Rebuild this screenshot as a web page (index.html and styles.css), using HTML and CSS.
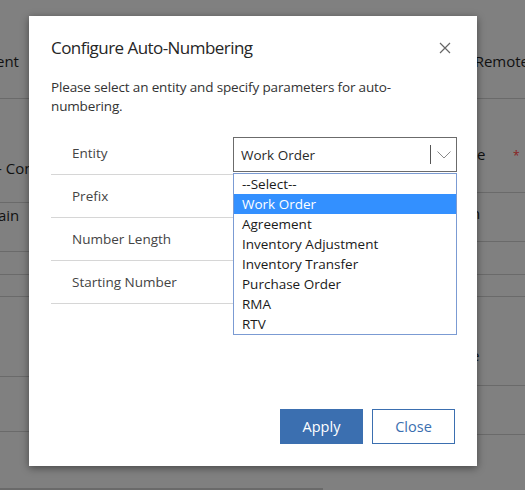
FILE: index.html
```html
<!DOCTYPE html>
<html>
<head>
<meta charset="utf-8">
<link rel="stylesheet" href="styles.css">
</head>
<body>
<div class="page">
  <div class="head">
    <div class="head-left">ent</div>
    <div class="head-right">Remote</div>
  </div>
  <div class="cols">
    <div class="col col-left">
      <div class="row r1"><span>- Con</span></div>
      <div class="row r2"><span>ain</span></div>
      <div class="row r3"></div>
      <div class="row r4"></div>
      <div class="row r5"></div>
      <div class="row r6"></div>
      <div class="row r7"></div>
    </div>
    <div class="col col-mid"></div>
    <div class="col col-right">
      <div class="row q1"><span>e</span><span class="star">*</span></div>
      <div class="row q2"><span>n</span></div>
      <div class="row q3"></div>
      <div class="row q4"></div>
      <div class="row q5"><span>e</span></div>
      <div class="row q6"></div>
    </div>
  </div>
  <div class="bottom-line"></div>
</div>

<div class="dialog">
  <div class="dialog-head">
    <h1 class="title">Configure Auto-Numbering</h1>
    <button class="close-x" aria-label="Close">
      <svg width="12" height="12" viewBox="0 0 12 12"><path d="M1 1L11 11M11 1L1 11" stroke="#666" stroke-width="1.2" fill="none"/></svg>
    </button>
  </div>
  <p class="desc">Please select an entity and specify parameters for auto-numbering.</p>
  <div class="form">
    <div class="frow">
      <div class="label">Entity</div>
      <div class="select-wrap">
        <div class="select">
          <span class="sel-text">Work Order</span>
          <span class="sel-div"></span>
          <svg class="chev" width="14" height="8" viewBox="0 0 14 8"><path d="M0.5 0.5L7 7L13.5 0.5" stroke="#8a8a8a" stroke-width="1" fill="none"/></svg>
        </div>
        <ul class="options">
          <li>--Select--</li>
          <li class="active">Work Order</li>
          <li>Agreement</li>
          <li>Inventory Adjustment</li>
          <li>Inventory Transfer</li>
          <li>Purchase Order</li>
          <li>RMA</li>
          <li>RTV</li>
        </ul>
      </div>
    </div>
    <div class="frow"><div class="label">Prefix</div></div>
    <div class="frow"><div class="label">Number Length</div></div>
    <div class="frow"><div class="label">Starting Number</div></div>
  </div>
  <div class="footer">
    <button class="btn btn-primary">Apply</button>
    <button class="btn btn-secondary">Close</button>
  </div>
</div>
</body>
</html>
```
FILE: styles.css
```css
* { box-sizing: border-box; }
html, body { margin: 0; padding: 0; }
body {
  width: 525px;
  height: 490px;
  overflow: hidden;
  background: #808080;
  font-family: "Open Sans", "Noto Sans", sans-serif;
  color: #1a1a1a;
  position: relative;
}
.page { width: 525px; height: 490px; }
.head {
  height: 99px;
  border-bottom: 1px solid #6a6a6a;
  display: flex;
  justify-content: space-between;
  align-items: flex-start;
  font-size: 15px;
  color: #111;
  padding-top: 51px;
}
.head-left { margin-left: -4px; }
.head-right { margin-right: -4px; }
.cols { display: grid; grid-template-columns: 29px 448px 48px; }
.col-left, .col-right { display: flex; flex-direction: column; font-size: 15px; color: #111; }
.row { border-bottom: 1px solid #6a6a6a; position: relative; }
.col-left .row { display: flex; justify-content: flex-start; }
.r1 { height: 104px; padding-top: 59px; }
.r1 span { margin-left: -3px; white-space: nowrap; }
.r2 { height: 49px; padding-top: 2px; }
.r2 span { margin-left: -2px; }
.r3 { height: 23px; }
.r4 { height: 22px; }
.r5 { height: 80px; }
.r6 { height: 55px; }
.r7 { height: 0; border: none; }
.q1 { height: 94px; padding-top: 45px; }
.q1 .star { position: absolute; left: 36px; top: 48px; color: #8b2020; font-size: 12px; }
.q2 { height: 49px; padding-top: 10px; }
.q2 span { margin-left: -6px; }
.q3 { height: 33px; }
.q4 { height: 22px; }
.q5 { height: 89px; padding-top: 48px; }
.q5 span { margin-left: -6px; }
.q6 { height: 49px; }
.bottom-line { position: absolute; left: 0; top: 488px; width: 323px; height: 2px; background: #6a6a6a; }

.dialog {
  position: absolute;
  left: 29px;
  top: 16px;
  width: 448px;
  height: 450px;
  background: #fff;
  box-shadow: 0 2px 8px rgba(0,0,0,0.45);
  padding: 20px 22px 22px 22px;
  display: flex;
  flex-direction: column;
}
.dialog-head { display: flex; justify-content: space-between; align-items: center; height: 24px; }
.title { margin: 0; font-size: 17px; font-weight: 400; color: #262626; line-height: 24px; letter-spacing: -0.55px; }
.close-x { border: none; background: none; padding: 0; margin-right: 3px; width: 14px; height: 14px; display: flex; align-items: center; justify-content: center; }
.desc { margin: 18px 0 0 0; font-size: 13.5px; line-height: 19px; color: #333; padding-right: 50px; letter-spacing: -0.15px; }
.form { margin-top: 16px; }
.frow {
  height: 43px;
  border-bottom: 1px solid #d6d6d6;
  display: flex;
  align-items: center;
  padding-left: 21px;
  position: relative;
}
.label { font-size: 13.5px; color: #444; width: 161px; flex-shrink: 0; }
.select-wrap { position: relative; align-self: flex-start; margin-top: 5px; flex-shrink: 0; }
.select {
  width: 224px;
  height: 35px;
  border: 1px solid #6b6b6b;
  display: flex;
  align-items: center;
  padding-left: 7px;
  font-size: 13.5px;
  color: #2a2a2a;
}
.sel-text { flex: 1; }
.sel-div { width: 1px; height: 19px; background: #555; margin-right: 6px; }
.chev { margin-right: 5px; }
.options {
  position: absolute;
  left: 0;
  top: 36px;
  width: 224px;
  margin: 0;
  padding: 0;
  list-style: none;
  background: #fff;
  border: 1px solid #7b9bd3;
  z-index: 5;
}
.options li { height: 20px; line-height: 20px; padding-left: 8px; font-size: 13.5px; color: #1a1a1a; }
.options li.active { background: #3390ff; color: #fff; }
.footer { margin-top: auto; display: flex; justify-content: flex-end; gap: 9px; }
.btn { width: 83px; height: 35px; font-family: inherit; font-size: 14.5px; padding: 0; }
.btn-primary { background: #3b6fb0; color: #fff; border: 1px solid #3b6fb0; }
.btn-secondary { background: #fff; color: #3b6fb0; border: 1px solid #3b6fb0; }
```
